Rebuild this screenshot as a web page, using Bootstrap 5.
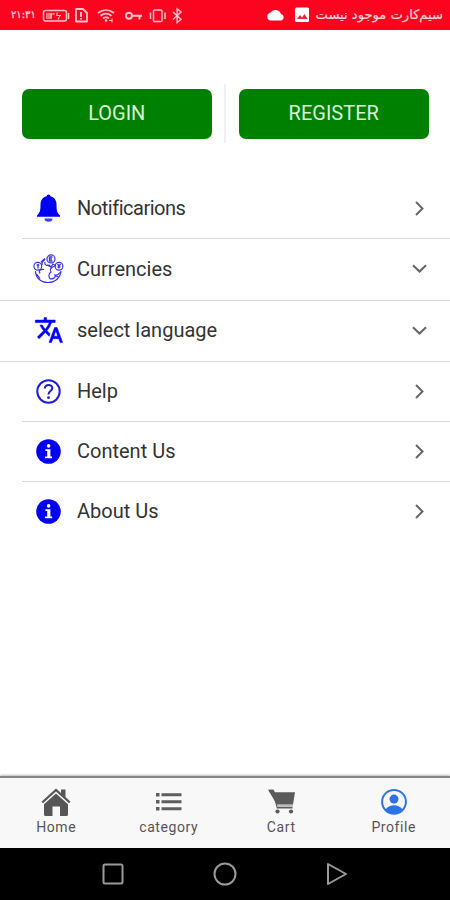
<!DOCTYPE html>
<html lang="en">
<head>
<meta charset="utf-8">
<meta name="viewport" content="width=device-width, initial-scale=1">
<title>Profile</title>
<link href="https://cdn.jsdelivr.net/npm/bootstrap@5.3.0/dist/css/bootstrap.min.css" rel="stylesheet">
<style>
body { font-family: Roboto, "Liberation Sans", sans-serif; color: #333; }
svg { display: block; flex-shrink: 0; overflow: visible; }
.screen { width: 450px; height: 900px; }
.status { height: 30px; background: #fc0320; color: #ffd3d8; padding: 0 7px 0 11px; font-family: "DejaVu Sans", sans-serif; }
.clock { font-size: 10px; width: 26px; line-height: 30px; margin-right: 5px; -webkit-text-stroke: .3px; }
.sim { font-size: 13.1px; line-height: 28px; width: 128px; margin-left: 5px; -webkit-text-stroke: .2px; }
.auth { padding: 54px 21px 0 21.5px; height: 148px; }
.btn-auth { --bs-btn-bg: #008000; --bs-btn-color: #d9f3d9; --bs-btn-hover-bg: #007000; --bs-btn-hover-color: #fff; height: 50px; width: 190.5px; border: 0; border-radius: 7px; font-size: 20px; padding: 0; line-height: 49px; margin-top: 5px; }
.divider { width: 2px; height: 59px; background: #f0f0f0; }
.entry { height: 60px; padding: 0 22px 2px 33px; font-size: 20px; color: #333; }
.entry.first { padding-bottom: 0; }
.entry.wide { height: 61px; }
.entry.short { height: 59px; padding-bottom: 1px; }
.tight { letter-spacing: -.48px; }
.entry .glyph { width: 31px; margin-right: 13px; color: #0000f5; display: flex; justify-content: center; }
.rule { height: 1px; background: #dadada; }
.rule.inset { margin-left: 22px; }
.chev { width: 17px; color: #666; }
.tabs { height: 72px; background: #f8f8f8; border-top: 2px solid #858585; box-shadow: 0 -1px 2px #bbb; font-size: 14px; letter-spacing: .6px; color: #555; }
.tabs a { color: #555; width: 112.5px; padding-top: 10px; line-height: 20px; }
.tabs svg { margin-bottom: 1px; }
.sys { height: 52px; background: #000; color: #999; padding: 0 102px; }
</style>
<script src="https://cdn.jsdelivr.net/npm/bootstrap@5.3.0/dist/js/bootstrap.bundle.min.js"></script>
</head>
<body class="bg-white">
<svg width="0" height="0" class="position-absolute">
  <symbol id="right" viewBox="0 0 17 17"><path d="M5 2l6.500 6.500L5 15" fill="none" stroke="currentColor" stroke-width="2"/></symbol>
  <symbol id="down" viewBox="0 0 17 17"><path d="M2 5.200l6.500 6.300L15 5.200" fill="none" stroke="currentColor" stroke-width="2"/></symbol>
  <symbol id="info" viewBox="0 0 25 25"><circle cx="12.500" cy="12.500" r="12.300" fill="currentColor"/><g fill="#fff"><circle cx="12.600" cy="6.900" r="1.800"/><path d="M9.400 10.200h5v7.200h1.700v1.900H9v-1.900h2.200v-5.300H9.400z"/></g></symbol>
</svg>
<div class="screen d-flex flex-column overflow-hidden">
  <header class="status d-flex align-items-center">
    <span class="clock text-nowrap" dir="ltr">۲۱:۳۱</span>
    <svg width="146" height="18" viewBox="42 6 146 18" fill="none" stroke="#ffc4ca" stroke-width="1.500">
      <rect x="43.500" y="10.500" width="23" height="10.500" rx="2"/><path d="M68.500 13v6"/><rect x="46" y="13" width="6" height="6" fill="#ff7482" stroke="none"/><path d="M51 13v5M51 14h3v-1M57 12.500v3h4M60 15.500l-2 4" stroke-width="1.100"/>
      <path d="M76 9h7l4 4v8.500H76z" stroke-linejoin="round" stroke-width="1.800"/><path d="M81 12v5M81 18v1.500" stroke-width="1.800"/>
      <path d="M98 13q8-6 16 0M100.500 15.700q5.500-4 11 0M103 18.300q3-2 6 0" stroke-width="1.700"/><circle cx="106" cy="20.500" r="1.200" fill="#ffd3d8" stroke="none"/><path d="M109 20.500h3m0-2v4" stroke-width="1"/>
      <circle cx="129" cy="15.700" r="3" stroke-width="1.900"/><path d="M132 15.700h10M139.500 16v3.500" stroke-width="2"/>
      <rect x="153.500" y="10" width="8.500" height="11.500" rx="1"/><path d="M150.500 12.500v6.500M165 12.500v6.500"/>
      <path d="M173 12l8 7.500-3.800 3V9l3.800 3-8 7.500" stroke-width="1.500"/>
    </svg>
    <svg class="ms-auto" width="45" height="16" viewBox="266 8 45 16"><path d="M271.500 21.500a4 4 0 0 1-.2-7.800 6 6 0 0 1 10.700 1.300 3.400 3.400 0 0 1 .5 6.500z" fill="#fff"/><rect x="296" y="8.500" width="14" height="14.500" rx="1.500" fill="#fff"/><path d="M298 20l3-4 2 2.500 2.500-3.500 3.200 5z" fill="#e42a40"/></svg>
    <span class="sim text-nowrap" dir="rtl" lang="fa">سیم‌کارت موجود نیست</span>
  </header>

  <section class="auth d-flex justify-content-between align-items-start">
    <a class="btn btn-auth" href="#">LOGIN</a>
    <span class="divider"></span>
    <a class="btn btn-auth" href="#">REGISTER</a>
  </section>

  <main class="flex-grow-1">
    <div class="entry first d-flex align-items-center"><span class="glyph"><svg width="25" height="28" viewBox="0 0 25 28" fill="currentColor"><path d="M12.500.5a2 2 0 0 1 2 1.700c4 1 6 4.300 6 8.300 0 6 .5 8 3.500 11v1.200H1v-1.200c3-3 3.500-5 3.500-11 0-4 2-7.300 6-8.300a2 2 0 0 1 2-1.700z"/><path d="M8.500 24.500h8a4 3.300 0 0 1-8 0z" opacity=".75"/></svg></span><span class="tight">Notificarions</span><svg class="chev ms-auto" height="17"><use href="#right"/></svg></div>
    <div class="rule inset"></div>
    <div class="entry wide d-flex align-items-center"><span class="glyph"><svg width="31" height="30" viewBox="0 0 31 30" fill="none" stroke="#3b35df" stroke-width="1.200">
      <path d="M2.500 17c0 6 4.500 11.500 12.500 11.500S27.500 23 28 17M8 8l4-3.500M7 19.500C5 16 8 15 11 15.500M3.500 20l3.500 4.500M14 11l4 2 2-3 3 2"/>
      <path d="M28 18c-2 1-3 4-6 3 1 3-2 4-5 4-2-3-1-6 1-7-2-2 0-5 4-6M12 8c-1 3 2 4 4 3l3 3M22 22l3 .5"/>
      <circle cx="4.800" cy="12.300" r="3.900"/><circle cx="18" cy="4.900" r="4"/><circle cx="26" cy="12.300" r="3.900"/>
      <path d="M5 10v4.500M3.700 11h2.500M19.500 3h-3v4h3M16 5h3M24.500 10l1.500 2 1.500-2M26 12v2.500M24.500 13h3M9 11V8.500L12 5" stroke-width="1.300"/>
    </svg></span><span>Currencies</span><svg class="chev ms-auto" height="17"><use href="#down"/></svg></div>
    <div class="rule"></div>
    <div class="entry d-flex align-items-center"><span class="glyph"><svg width="28" height="26" viewBox="1 1.500 22 21" fill="currentColor"><path d="M12.870 15.070l-2.540-2.510.03-.03A17.520 17.520 0 0 0 14.070 6H17V4h-7V2H8v2H1v2h11.170C11.500 7.920 10.440 9.750 9 11.350 8.070 10.320 7.300 9.190 6.690 8h-2c.73 1.630 1.730 3.170 2.980 4.560l-5.090 5.020L4 19l5-5 3.110 3.110.76-2.040zM18.500 10h-2L12 22h2l1.120-3h4.750L21 22h2l-4.500-12zm-2.620 7l1.620-4.330L19.120 17h-3.240z" stroke="currentColor" stroke-width=".45"/></svg></span><span>select language</span><svg class="chev ms-auto" height="17"><use href="#down"/></svg></div>
    <div class="rule"></div>
    <div class="entry short d-flex align-items-center"><span class="glyph"><svg width="25" height="25" viewBox="0 0 25 25" fill="none" stroke="#221bd8" stroke-width="2"><circle cx="12.500" cy="12.500" r="11.200"/><path d="M8.800 9.500c.2-4.700 7.500-4.500 7.500-.4 0 3-3.800 3-3.800 6.300"/><circle cx="12.500" cy="18.700" r="1.400" fill="#221bd8" stroke="none"/></svg></span><span>Help</span><svg class="chev ms-auto" height="17"><use href="#right"/></svg></div>
    <div class="rule inset"></div>
    <div class="entry short d-flex align-items-center"><span class="glyph"><svg width="25" height="25"><use href="#info"/></svg></span><span>Content Us</span><svg class="chev ms-auto" height="17"><use href="#right"/></svg></div>
    <div class="rule inset"></div>
    <div class="entry d-flex align-items-center"><span class="glyph"><svg width="25" height="25"><use href="#info"/></svg></span><span>About Us</span><svg class="chev ms-auto" height="17"><use href="#right"/></svg></div>
  </main>

  <nav class="tabs d-flex">
    <a class="d-flex flex-column align-items-center text-decoration-none" href="#"><svg width="30" height="28" viewBox="0 0 30 28" fill="#565656"><path d="M15 .5L20 5V1.500h4.500V9l5 4.800-1.500 1.500L15 3.500 2 15.300.5 13.800z"/><path d="M15 5.500l12 10.800v10.200q0 1.500-1.500 1.500H19v-9.500h-7.500V28H4.500Q3 28 3 26.500V16.300z"/></svg><span>Home</span></a>
    <a class="d-flex flex-column align-items-center text-decoration-none" href="#"><svg width="27" height="28" viewBox="0 0 27 28" fill="#5e5e5e"><path d="M1 5h3.500v3.500H1zM6.500 5.300H26.500v3H6.500zM1 12h3.500v3.500H1zM6.500 12.300H26.500v3H6.500zM1 19h3.500v3.500H1zM6.500 19.300H26.500v3H6.500z"/></svg><span>category</span></a>
    <a class="d-flex flex-column align-items-center text-decoration-none" href="#"><svg width="27" height="28" viewBox="0 0 27 28" fill="#5b5b5b"><path d="M0 1.700h5.500l1.300 2.500H27l-2 12.500H9z"/><path d="M1 2.700h4l4.500 17h15" fill="none" stroke="#5b5b5b" stroke-width="1.800"/><path d="M9 16.500h16v2.300H9z" fill="#bbb"/><circle cx="9.500" cy="23.500" r="2.100"/><circle cx="23" cy="23.500" r="2.100"/></svg><span>Cart</span></a>
    <a class="d-flex flex-column align-items-center text-decoration-none" href="#"><svg width="26" height="28" viewBox="0 0 26 28"><circle cx="13" cy="13.800" r="11.900" fill="none" stroke="#2e73e6" stroke-width="2"/><circle cx="13" cy="11.100" r="4.500" fill="#2e73e6"/><path d="M4.500 21.300q3.500-4 8.500-4t8.500 4q-3 4.300-8.500 4.300t-8.500-4.300z" fill="#2e73e6"/></svg><span>Profile</span></a>
  </nav>
  <footer class="sys d-flex align-items-center justify-content-between">
    <svg width="22" height="22" fill="none" stroke="currentColor" stroke-width="2"><rect x="1.500" y="1.500" width="19" height="19" rx="1.500"/></svg>
    <svg width="24" height="24" fill="none" stroke="currentColor" stroke-width="2"><circle cx="12" cy="12" r="10.500"/></svg>
    <svg width="22" height="24" fill="none" stroke="currentColor" stroke-width="2" stroke-linejoin="round"><path d="M2 2l18 10L2 22z"/></svg>
  </footer>
</div>
</body>
</html>
